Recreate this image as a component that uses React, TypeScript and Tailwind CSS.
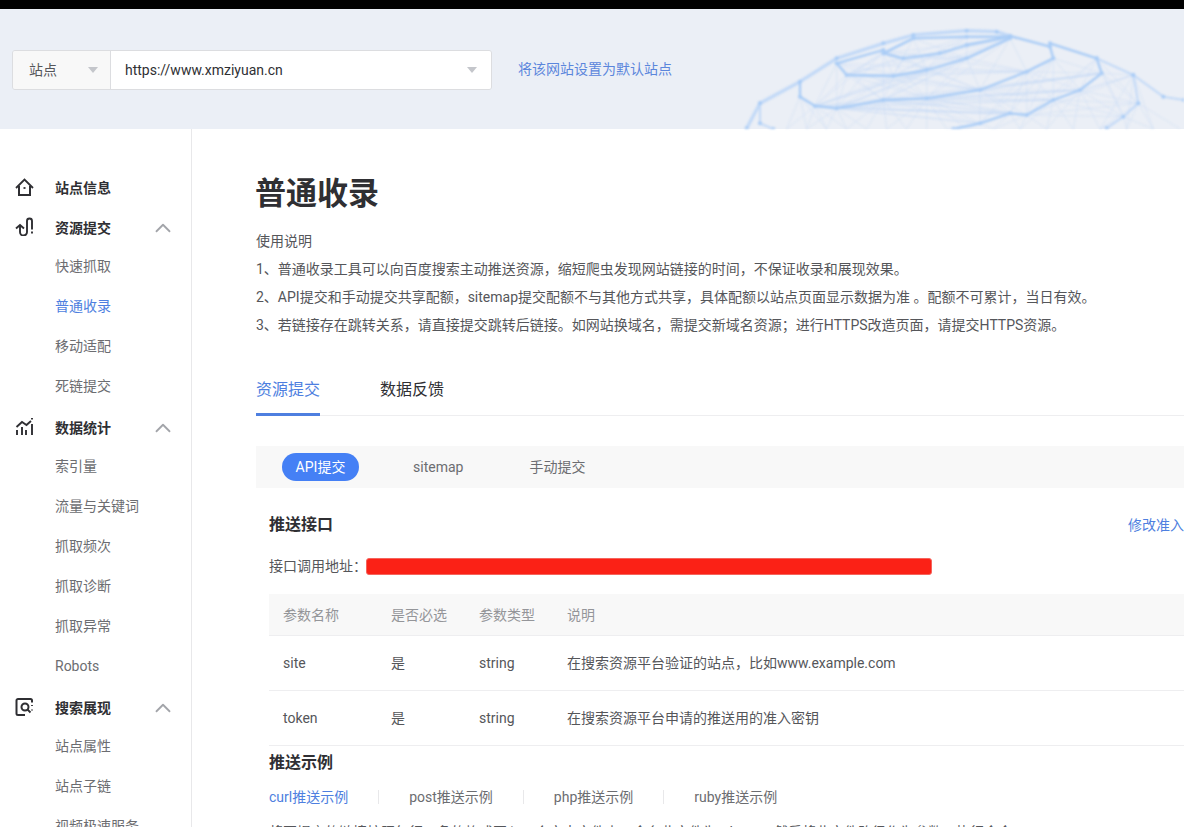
import { ChevronUp } from "lucide-react";

const FONT = "font-['Roboto','Noto_Sans_CJK_SC',sans-serif]";

// globe mesh, coordinates read off the reference at 3x
const RINGS: [number, number][][] = [
  [[810, 108], [770, 95], [680, 92], [520, 105], [430, 130], [290, 175], [180, 245], [60, 310], [20, 385]],
  [[810, 110], [680, 110], [520, 115], [430, 160], [490, 175], [600, 160], [680, 135], [810, 110]],
  [[810, 115], [680, 175], [560, 210], [460, 228], [320, 225], [290, 190], [430, 150]],
  [[810, 108], [930, 140], [940, 175], [860, 215], [720, 270], [560, 295], [430, 300], [290, 325], [225, 318], [180, 290], [180, 245]],
  [[930, 130], [1070, 175], [1085, 220], [1020, 270], [940, 300], [860, 345], [810, 340], [720, 370], [640, 387]],
  [[1070, 175], [1180, 225], [1195, 310], [1150, 350], [1100, 385]],
  [[1180, 225], [1270, 290], [1332, 300]],
  [[60, 310], [60, 370], [100, 387]],
];

const DOTS = RINGS.flat();

type Seg = [number, number, number, number];

// thin lines that fan out between two rings, plus the ones running off the bottom edge
const BOTTOM = [140, 200, 260, 320, 380, 440, 500, 560, 620, 680, 760, 840, 920, 1000, 1080, 1160, 1240, 1320];
const toBottom = (pts: [number, number][], reach: number): Seg[] =>
  pts.flatMap(([x, y]) => BOTTOM.filter((b) => Math.abs(b - x) < reach).map((b): Seg => [x, y, b, 387]));
const between = (from: [number, number][], to: [number, number][]): Seg[] =>
  from.flatMap(([x, y]) => to.map(([a, b]): Seg => [x, y, a, b]));

const FANS: Seg[] = [
  ...between(RINGS[2], RINGS[3].slice(3, 9)),
  ...between(RINGS[1].slice(1, 6), RINGS[2].slice(0, 5)),
  ...between(RINGS[3].slice(2, 9), RINGS[4].slice(2, 8)),
  ...between(RINGS[4].slice(1, 6), RINGS[5].slice(0, 4)),
  ...toBottom(RINGS[3].slice(5, 10), 130),
  ...toBottom(RINGS[4].slice(3, 8), 110),
  ...toBottom(RINGS[5].slice(1, 4), 130),
];

function Globe() {
  return (
    <svg
      className="absolute right-0 top-0 h-[120px] w-[444px] blur-[0.8px]"
      viewBox="0 27 1332 360"
      fill="none"
      aria-hidden="true"
    >
      {FANS.map(([x1, y1, x2, y2], i) => (
        <line key={i} x1={x1} y1={y1} x2={x2} y2={y2} stroke="#b4d0f6" strokeOpacity="0.55" strokeWidth="1.600" />
      ))}
      {RINGS.map((r, i) => (
        <polyline
          key={i}
          points={r.map((p) => p.join(",")).join(" ")}
          stroke={i === 0 || i > 4 ? "#c2d9f7" : "#a9ccf6"}
          strokeWidth={i === 0 ? 10 : i > 4 ? 6 : 7}
          strokeLinejoin="round"
        />
      ))}
      {DOTS.map(([x, y], i) => (
        <circle key={i} cx={x} cy={y} r="6" fill="#a9ccf6" />
      ))}
    </svg>
  );
}

function Caret() {
  return <span className="h-0 w-0 border-x-[5px] border-t-[6px] border-x-transparent border-t-[#c4c6cb]" />;
}

function HomeIcon() {
  return (
    <svg viewBox="0 0 20 20" className="h-5 w-5" fill="none" stroke="#2f2f33" strokeWidth="1.8">
      <path d="M1 10 9.500 1.500 18 10" />
      <path d="M4 8v9h11V8" strokeWidth="2" />
      <path d="M8.500 10h2" />
    </svg>
  );
}

function SubmitIcon() {
  return (
    <svg viewBox="0 0 20 20" className="-mt-[4px] h-5 w-5" fill="none" stroke="#2f2f33" strokeWidth="1.9">
      <path d="M1 12.500 5 9l4 3.500" />
      <path d="M5 9v7a3.500 3.500 0 0 0 7 0V5a2.500 2.500 0 0 1 5 0v8.500" />
      <path d="M17 15.500v2" />
    </svg>
  );
}

function ChartIcon() {
  return (
    <svg viewBox="0 0 20 20" className="-mt-[2px] h-5 w-5" fill="none" stroke="#2f2f33" strokeWidth="1.9">
      <path d="M1.500 10 7 5l4.500 3L16 4" />
      <path d="M2 13v5M7 10v8M11 13v5M17 7v11" />
      <path d="M17 1v1.500" />
    </svg>
  );
}

function SearchIcon() {
  return (
    <svg viewBox="0 0 20 20" className="h-5 w-5" fill="none" stroke="#2f2f33" strokeWidth="2">
      <path d="M17 4.500V2.500A1.500 1.500 0 0 0 15.500 1H3A1.500 1.500 0 0 0 1.500 2.500V15.500A1.500 1.500 0 0 0 3 17h7" />
      <circle cx="10" cy="9" r="3.500" />
      <path d="m12.500 11.500 3 3M17 7v1M17 11.500v1" strokeWidth="1.800" />
    </svg>
  );
}

const NAV = [
  { title: "站点信息", icon: <HomeIcon />, items: [] as string[] },
  { title: "资源提交", icon: <SubmitIcon />, items: ["快速抓取", "普通收录", "移动适配", "死链提交"] },
  { title: "数据统计", icon: <ChartIcon />, items: ["索引量", "流量与关键词", "抓取频次", "抓取诊断", "抓取异常", "Robots"] },
  { title: "搜索展现", icon: <SearchIcon />, items: ["站点属性", "站点子链", "视频极速服务"] },
];

function Sidebar() {
  return (
    <aside className="w-[192px] shrink-0 border-r border-[#e8e8ea] pt-[39px]">
      {NAV.map((g) => (
        <div key={g.title} className={g.items.length ? "pb-[2px]" : ""}>
          <div className="flex h-10 items-center pl-[15px] pr-[15px]">
            <span className="flex w-[40px] shrink-0">{g.icon}</span>
            <span className="flex-1 text-sm font-semibold text-[#2f2f33]">{g.title}</span>
            {g.items.length > 0 && <ChevronUp className="h-[26px] w-[26px] text-[#a3a5aa]" strokeWidth={1.7} />}
          </div>
          {g.items.length > 0 && (
            <ul className="-mt-[2px]">
              {g.items.map((t) => (
                <li
                  key={t}
                  className={`flex h-10 items-center whitespace-nowrap pl-[55px] text-sm ${
                    t === "普通收录" ? "text-[#4e7fe0]" : "text-[#6c6d71]"
                  }`}
                >
                  {t}
                </li>
              ))}
            </ul>
          )}
        </div>
      ))}
    </aside>
  );
}

const PARAMS = [
  ["site", "是", "string", "在搜索资源平台验证的站点，比如www.example.com"],
  ["token", "是", "string", "在搜索资源平台申请的推送用的准入密钥"],
];

const COLS = "grid grid-cols-[108px_88px_88px_1fr] items-center pl-[14px]";

function Content() {
  return (
    <main className="min-w-0 flex-1 pl-[64px] pt-[45px]">
      <h1 className="text-[31px] font-bold leading-10 -ml-[1px] text-[#2f2f33]">普通收录</h1>
      <div className="mt-[13px] text-sm leading-7 text-[#55565a]">
        <p>使用说明</p>
        <p>1、普通收录工具可以向百度搜索主动推送资源，缩短爬虫发现网站链接的时间，不保证收录和展现效果。</p>
        <p>2、API提交和手动提交共享配额，sitemap提交配额不与其他方式共享，具体配额以站点页面显示数据为准 。配额不可累计，当日有效。</p>
        <p>3、若链接存在跳转关系，请直接提交跳转后链接。如网站换域名，需提交新域名资源；进行HTTPS改造页面，请提交HTTPS资源。</p>
      </div>

      <div className="mt-[25px] flex h-[52px] gap-[60px] border-b border-[#eeeef0] text-base">
        <span className="-mb-px flex items-center border-b-[3px] border-[#4e7fe0] pt-[2px] text-[#4e7fe0]">资源提交</span>
        <span className="-mb-px flex items-center border-b-[3px] border-transparent pt-[2px] text-[#2f2f33]">数据反馈</span>
      </div>

      <div className="mt-[30px] flex h-[42px] items-center bg-[#f8f8f8] pl-[26px] text-sm text-[#6c6d71]">
        <span className="flex h-7 w-[77px] items-center justify-center rounded-full bg-[#4580f5] text-white">API提交</span>
        <span className="ml-[54px]">sitemap</span>
        <span className="ml-[66px]">手动提交</span>
      </div>

      <div className="pl-[13px]">
        <div className="mt-[25px] flex items-center justify-between">
          <h2 className="text-base font-semibold leading-6 text-[#2f2f33]">推送接口</h2>
          <a className="text-sm text-[#4e7fe0]">修改准入</a>
        </div>
        <div className="mt-[20px] flex h-[18px] items-center text-sm text-[#55565a]">
          接口调用地址：
          <span className="-ml-px h-[17px] w-[566px] rounded-[3px] border border-[#f5645c] bg-[#fb2116]" />
        </div>

        <div className={`${COLS} mt-[19px] h-[42px] border-b border-[#eeeef0] bg-[#f8f8f8] text-sm text-[#949599]`}>
          <span>参数名称</span>
          <span>是否必选</span>
          <span>参数类型</span>
          <span>说明</span>
        </div>
        {PARAMS.map((row) => (
          <div key={row[0]} className={`${COLS} h-[55px] border-b border-[#eeeef0] text-sm text-[#55565a]`}>
            {row.map((c) => (
              <span key={c}>{c}</span>
            ))}
          </div>
        ))}

        <h2 className="mt-[5px] text-base font-semibold leading-6 text-[#2f2f33]">推送示例</h2>
        <div className="mt-[15px] flex h-[14px] items-center text-sm text-[#6c6d71]">
          <span className="text-[#4e7fe0]">curl推送示例</span>
          <span className="ml-[30px] h-[14px] w-px bg-[#e8e8ea]" />
          <span className="ml-[30px]">post推送示例</span>
          <span className="ml-[30px] h-[14px] w-px bg-[#e8e8ea]" />
          <span className="ml-[30px]">php推送示例</span>
          <span className="ml-[30px] h-[14px] w-px bg-[#e8e8ea]" />
          <span className="ml-[30px]">ruby推送示例</span>
        </div>
        <p className="mt-[16px] whitespace-nowrap text-sm leading-6 text-[#55565a]">
          将要提交的链接按照每行一条的格式写入一个文本文件中，命名此文件为urls.txt，然后将此文件路径作为参数，执行命令
        </p>
      </div>
    </main>
  );
}

export default function App() {
  return (
    <div className={`${FONT} flex h-[827px] w-[1184px] flex-col overflow-hidden bg-white`}>
      <div className="h-[9px] shrink-0 bg-black" />
      <header className="relative flex h-[120px] shrink-0 items-center bg-[#ebeff6] pl-[12px] pt-[1px]">
        <Globe />
        <div className="relative flex h-10 w-[480px] overflow-hidden rounded-[3px] border border-[#dcdde0] text-sm">
          <div className="flex w-[98px] items-center justify-between border-r border-[#dcdde0] bg-[#f8f8f8] pl-[16px] pr-[12px] text-[#55565a]">
            站点
            <Caret />
          </div>
          <div className="flex flex-1 items-center justify-between bg-white pl-[14px] pr-[14px] text-[#2f2f33]">
            https://www.xmziyuan.cn
            <Caret />
          </div>
        </div>
        <a className="relative ml-[26px] -mt-[2px] text-sm text-[#5b86dc]">将该网站设置为默认站点</a>
      </header>
      <div className="flex min-h-0 flex-1">
        <Sidebar />
        <Content />
      </div>
    </div>
  );
}
